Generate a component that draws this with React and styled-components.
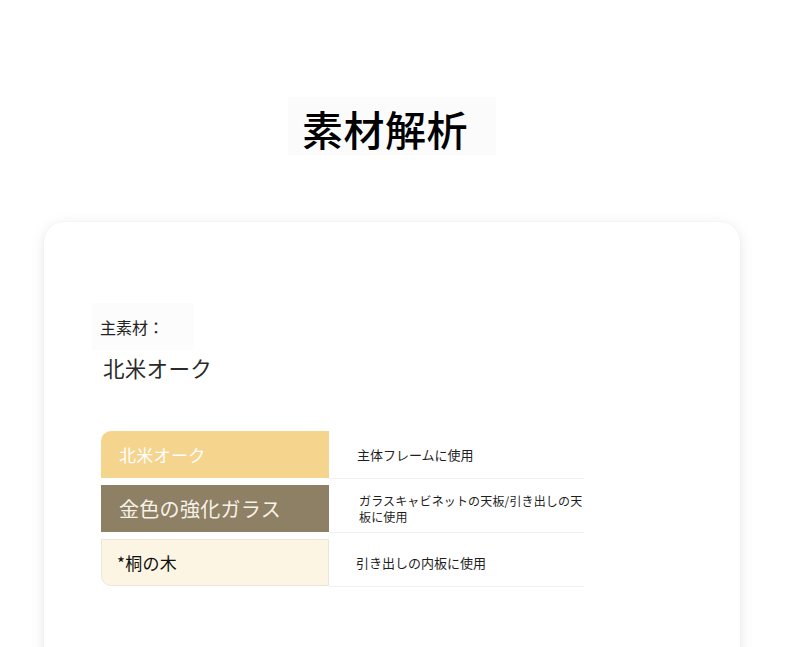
import React from "react";
import styled, { createGlobalStyle } from "styled-components";

const Global = createGlobalStyle`
  html, body { margin: 0; padding: 0; background: #ffffff; }
  body {
    font-family: "Noto Sans CJK JP", "Noto Sans", sans-serif;
    color: #222;
    overflow: hidden;
  }
`;

const Page = styled.div`
  width: 696px;
  margin-left: 44px;
  display: flex;
  flex-direction: column;
  align-items: center;
`;

const Title = styled.h1`
  margin: 97px 0 0 0;
  padding: 2px 28px 0 14px;
  height: 56px;
  line-height: 58px;
  font-size: 41px;
  font-weight: 500;
  color: #000;
  background: #fbfbfb;
  letter-spacing: 0.5px;
`;

const Card = styled.section`
  align-self: stretch;
  margin-top: 67px;
  background: #fff;
  border-radius: 20px;
  box-shadow: 0 3px 14px rgba(0, 0, 0, 0.1), 0 0 2px rgba(0, 0, 0, 0.04);
  padding: 81px 56px 120px 48px;
  display: flex;
  flex-direction: column;
  align-items: flex-start;
`;

const LabelBox = styled.div`
  padding: 12px 30px 11px 8px;
  background: #fcfcfc;
`;

const Label = styled.div`
  font-size: 16px;
  line-height: 24px;
  color: #222;
`;

const Value = styled.div`
  margin-top: 3px;
  padding-left: 11px;
  font-size: 21.5px;
  line-height: 30px;
  color: #2a2a2a;
  letter-spacing: 0.3px;
`;

const Table = styled.div`
  margin-top: 48px;
  margin-left: 9px;
  display: flex;
  flex-direction: column;
  gap: 6px;
`;

const Row = styled.div`
  display: grid;
  grid-template-columns: 228px 255px;
  align-items: start;
`;

const Material = styled.div`
  box-sizing: border-box;
  height: 47px;
  display: flex;
  align-items: center;
  padding-left: ${(p) => p.$pad || 17}px;
  font-size: ${(p) => p.$size || 17}px;
  color: ${(p) => p.$fg};
  background: ${(p) => p.$bg};
  border: 1px solid ${(p) => p.$border || "transparent"};
  border-radius: ${(p) => p.$radius || "0"};
  letter-spacing: 0.3px;
`;

const Usage = styled.div`
  box-sizing: border-box;
  height: 48px;
  display: flex;
  align-items: center;
  padding-left: ${(p) => p.$pad || 28}px;
  border-bottom: 1px solid #f0f0f0;
`;

const UsageText = styled.span`
  max-width: 226px;
  font-size: ${(p) => p.$size || 13}px;
  line-height: 16px;
  letter-spacing: ${(p) => p.$ls || 0}px;
  color: #1e1e1e;
`;

const rows = [
  {
    name: "北米オーク",
    bg: "#f5d48d",
    fg: "#ffffff",
    size: 17,
    radius: "10px 0 0 0",
    usage: "主体フレームに使用",
    uSize: 13,
    uLs: 0,
    uPad: 28,
  },
  {
    name: "金色の強化ガラス",
    bg: "#8e8064",
    fg: "#f7f2e8",
    size: 20,
    usage: "ガラスキャビネットの天板/引き出しの天板に使用",
    uSize: 12,
    uLs: 0.15,
    uPad: 30,
  },
  {
    name: "*桐の木",
    bg: "#fdf5e4",
    fg: "#111",
    size: 17,
    pad: 15,
    border: "#ece6da",
    radius: "0 0 0 10px",
    usage: "引き出しの内板に使用",
    uSize: 13,
    uLs: 0,
    uPad: 27,
  },
];

export default function App() {
  return (
    <>
      <Global />
      <Page>
        <Title>素材解析</Title>
        <Card>
          <LabelBox>
            <Label>主素材：</Label>
          </LabelBox>
          <Value>北米オーク</Value>
          <Table>
            {rows.map((r) => (
              <Row key={r.name}>
                <Material
                  $bg={r.bg}
                  $fg={r.fg}
                  $size={r.size}
                  $pad={r.pad}
                  $border={r.border}
                  $radius={r.radius}
                >
                  {r.name}
                </Material>
                <Usage $pad={r.uPad}>
                  <UsageText $size={r.uSize} $ls={r.uLs}>
                    {r.usage}
                  </UsageText>
                </Usage>
              </Row>
            ))}
          </Table>
        </Card>
      </Page>
    </>
  );
}
